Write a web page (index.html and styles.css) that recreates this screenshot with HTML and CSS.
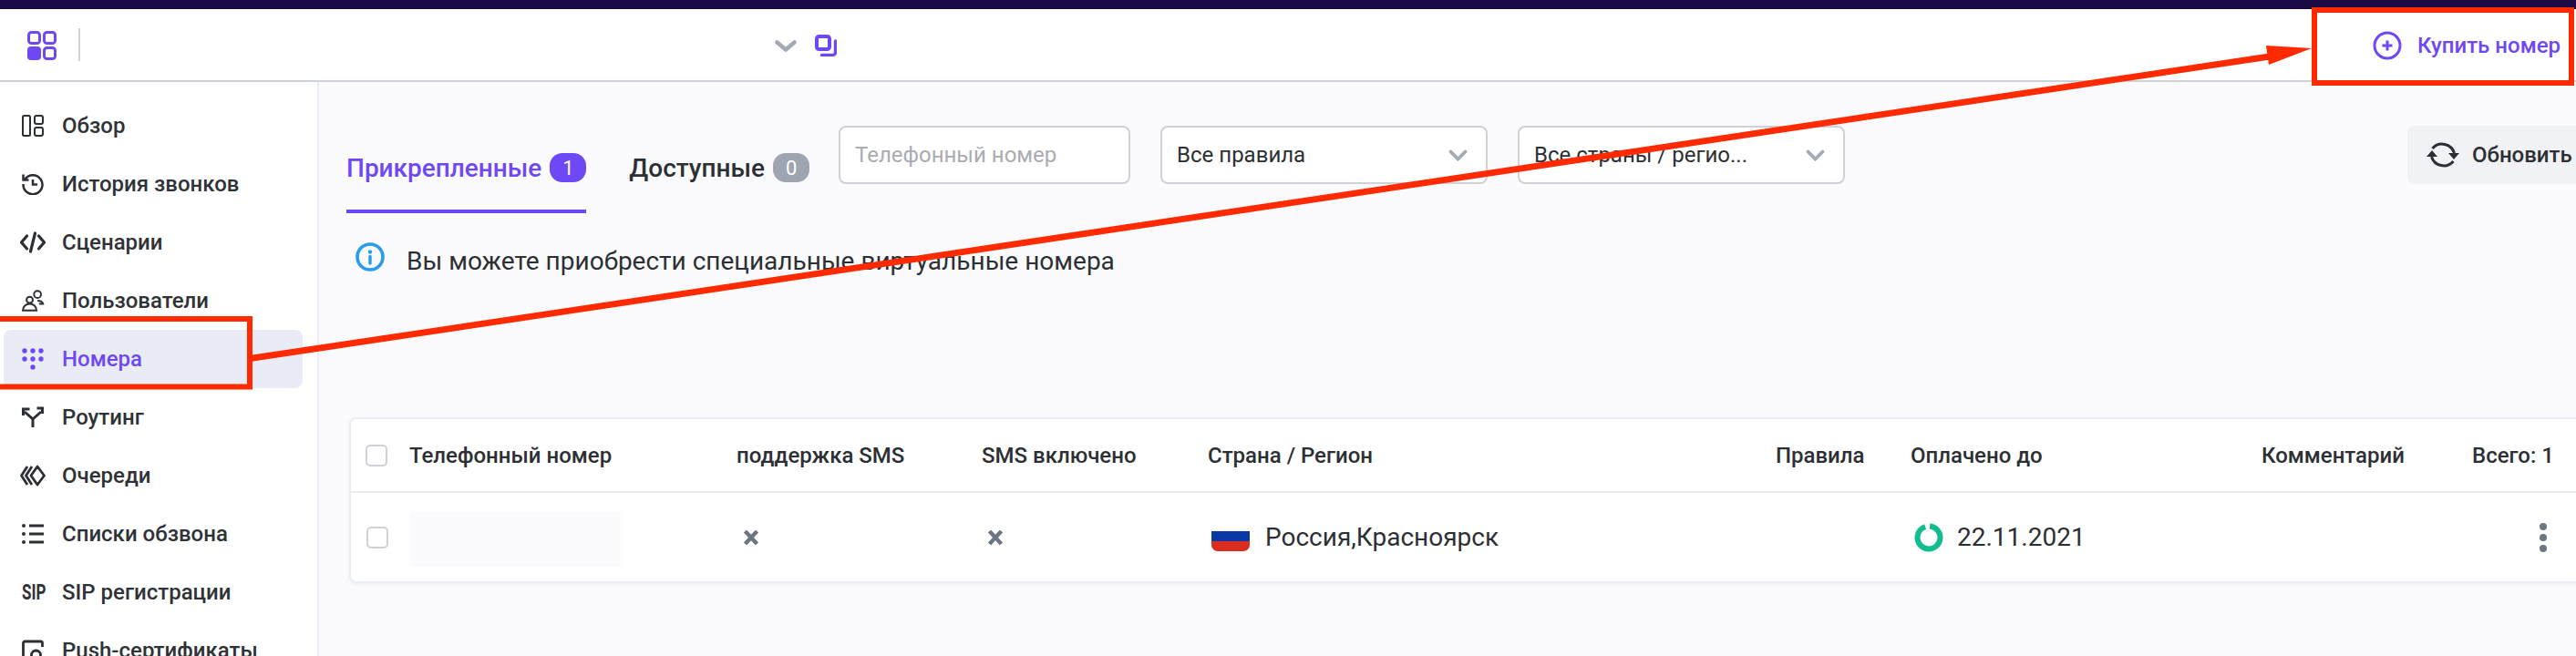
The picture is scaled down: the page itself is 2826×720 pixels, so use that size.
FILE: index.html
```html
<!DOCTYPE html>
<html lang="ru">
<head>
<meta charset="utf-8">
<title>Номера</title>
<link rel="stylesheet" href="styles.css">
</head>
<body>
<div class="topstrip"></div>
<header class="header">
  <svg class="apps" viewBox="0 0 32 32" width="32" height="32"><g fill="none" stroke="#6f48f6" stroke-width="3"><rect x="1.5" y="1.5" width="12" height="12" rx="3"/><rect x="18.5" y="1.5" width="12" height="12" rx="3"/><rect x="18.5" y="18.5" width="12" height="12" rx="3"/></g><rect x="0" y="17" width="15" height="15" rx="4" fill="#6f48f6"/></svg>
  <span class="vline"></span>
  <div class="switch">
    <svg viewBox="0 0 24 13" width="24" height="13"><path d="M2.500 2.500l9.500 8 9.500-8" fill="none" stroke="#a3a9b5" stroke-width="4.500" stroke-linecap="round" stroke-linejoin="round"/></svg>
    <svg viewBox="0 0 24 24" width="24" height="24"><rect x="2" y="2" width="14" height="14" rx="2.500" fill="none" stroke="#6f48f6" stroke-width="4"/><path d="M22.500 7v12.500a3 3 0 0 1-3 3H7.500" fill="none" stroke="#6f48f6" stroke-width="3.400" stroke-linecap="round"/></svg>
  </div>
  <a class="buy">
    <svg viewBox="0 0 32 32" width="32" height="32"><circle cx="16" cy="16" r="14" fill="none" stroke="#6f48f6" stroke-width="3"/><path d="M16 10.500v11M10.500 16h11" stroke="#6f48f6" stroke-width="3"/></svg>
    <span>Купить номер</span>
  </a>
</header>
<div class="body">
  <nav class="side">
    <a class="item"><svg class="ic" viewBox="0 0 24 24"><g fill="none" stroke="#2c2f33" stroke-width="2"><rect x="1" y="1" width="8" height="22" rx="1.500"/><rect x="14" y="1" width="9" height="9" rx="2"/><rect x="14" y="14" width="9" height="9" rx="2"/></g></svg><span>Обзор</span></a>
    <a class="item"><svg class="ic" viewBox="0 0 24 24"><path d="M3.500 6.500A10.500 10.500 0 1 1 1.500 12M1.500 1.500v6h6M12 7v5.500h5" fill="none" stroke="#2c2f33" stroke-width="2.500"/></svg><span>История звонков</span></a>
    <a class="item"><svg class="ic ic-w" viewBox="0 0 28 24"><path d="M7.500 5l-6 7 6 7M20.500 5l6 7-6 7M16.500 2l-5 20" fill="none" stroke="#2c2f33" stroke-width="3.200" stroke-linecap="round" stroke-linejoin="round"/></svg><span>Сценарии</span></a>
    <a class="item"><svg class="ic ic-w" viewBox="0 0 28 28"><g fill="none" stroke="#2c2f33" stroke-width="2.300"><circle cx="10" cy="13" r="4"/><path d="M1.200 26.500c0-5 4-8.500 8.800-8.500s8.800 3.500 8.800 8.500z"/><circle cx="20" cy="6" r="4.500"/><path d="M20 14c3 0 6 1 7 4h-5"/></g></svg><span>Пользователи</span></a>
    <a class="item active"><svg class="ic" viewBox="0 0 24 24"><g fill="#6f48f6"><circle cx="3" cy="3" r="2.700"/><circle cx="12" cy="3" r="2.700"/><circle cx="21" cy="3" r="2.700"/><circle cx="3" cy="12" r="2.700"/><circle cx="12" cy="12" r="2.700"/><circle cx="21" cy="12" r="2.700"/><circle cx="12" cy="21" r="2.700"/></g></svg><span>Номера</span></a>
    <a class="item"><svg class="ic" viewBox="0 0 24 24"><path d="M12 23v-9L3 6M12 14l9-8M1.500 10V3h7M22.500 8V2h-6" fill="none" stroke="#2c2f33" stroke-width="3"/></svg><span>Роутинг</span></a>
    <a class="item"><svg class="ic ic-w" viewBox="0 0 28 24"><path d="M8 2L1.500 12 8 22M13 2L6.500 12 13 22M19 2l-7 10 7 10 7.500-10z" fill="none" stroke="#2c2f33" stroke-width="2.800" stroke-linejoin="round"/></svg><span>Очереди</span></a>
    <a class="item"><svg class="ic" viewBox="0 0 24 24"><path d="M8 3h16M8 12h16M8 21h16" stroke="#2c2f33" stroke-width="2.800"/><g fill="#2c2f33"><circle cx="2" cy="3" r="2"/><circle cx="2" cy="12" r="2"/><circle cx="2" cy="21" r="2"/></g></svg><span>Списки обзвона</span></a>
    <a class="item"><b class="sip-ic">SIP</b><span>SIP регистрации</span></a>
    <a class="item"><svg class="ic" viewBox="0 0 24 24"><path d="M6 20H3a1.500 1.500 0 0 1-1.500-1.500V4A2 2 0 0 1 3.500 2h17A2 2 0 0 1 22.500 4v4" fill="none" stroke="#2c2f33" stroke-width="2.800"/><circle cx="15.500" cy="17" r="5" fill="none" stroke="#2c2f33" stroke-width="2.800"/></svg><span>Push-сертификаты</span></a>
  </nav>
  <main class="main">
    <div class="toolbar">
      <div class="tabs">
        <div class="tab on"><span>Прикрепленные</span><b class="badge">1</b></div>
        <div class="tab"><span>Доступные</span><b class="badge grey">0</b></div>
      </div>
      <div class="field input">Телефонный номер</div>
      <div class="field select"><span>Все правила</span><svg viewBox="0 0 20 13" width="21" height="13"><path d="M2 2.500l8 8 8-8" fill="none" stroke="#a3a9b5" stroke-width="3.800" stroke-linecap="round"/></svg></div>
      <div class="field select"><span>Все страны / регио...</span><svg viewBox="0 0 20 13" width="21" height="13"><path d="M2 2.500l8 8 8-8" fill="none" stroke="#a3a9b5" stroke-width="3.800" stroke-linecap="round"/></svg></div>
      <button class="refresh"><svg viewBox="0 0 36 32" width="36" height="32"><path d="M6.500 9A14 14 0 0 1 30.500 14M29.500 23A14 14 0 0 1 5.500 18" fill="none" stroke="#2c2f33" stroke-width="3"/><path d="M24 14h12l-6 7zM0 18h12l-6-7z" fill="#2c2f33"/></svg><span>Обновить</span></button>
    </div>
    <p class="notice"><svg viewBox="0 0 32 32" width="32" height="32"><circle cx="16" cy="16" r="14" fill="none" stroke="#2b9bed" stroke-width="3.600"/><circle cx="16" cy="10.500" r="2.200" fill="#2b9bed"/><path d="M16 15.500v7.500" stroke="#2b9bed" stroke-width="3.400" stroke-linecap="round"/></svg><span>Вы можете приобрести специальные виртуальные номера</span></p>
    <section class="card">
      <div class="row head">
        <span class="check"></span>
        <span class="c c1">Телефонный номер</span>
        <span class="c c2">поддержка SMS</span>
        <span class="c c3">SMS включено</span>
        <span class="c c4">Страна / Регион</span>
        <span class="c c5">Правила</span>
        <span class="c c6">Оплачено до</span>
        <span class="c c7">Комментарий</span>
        <span class="c c8">Всего: 1</span>
      </div>
      <div class="row data">
        <span class="check"></span>
        <span class="c c1"><i class="mask"></i></span>
        <span class="c c2"><svg viewBox="0 0 18 16" width="18" height="16"><path d="M2.500 1l13 14M15.500 1l-13 14" stroke="#6c7683" stroke-width="4.400"/></svg></span>
        <span class="c c3"><svg viewBox="0 0 18 16" width="18" height="16"><path d="M2.500 1l13 14M15.500 1l-13 14" stroke="#6c7683" stroke-width="4.400"/></svg></span>
        <span class="c c4 big"><i class="flag"></i>Россия,Красноярск</span>
        <span class="c c5"></span>
        <span class="c c6 big"><svg viewBox="0 0 32 32" width="32" height="32"><circle cx="16" cy="16" r="12.500" fill="none" stroke="#10bd8f" stroke-width="6" stroke-dasharray="73 5.500" transform="rotate(-85 16 16)"/></svg>22.11.2021</span>
        <span class="c c7"></span>
        <span class="c c8 more"><i></i><i></i><i></i></span>
      </div>
    </section>
  </main>
</div>
<svg class="marks" viewBox="0 0 2826 720" width="2826" height="720">
  <g fill="none" stroke="#ff2a00" stroke-width="6">
    <path d="M-5 350H274V424.500H-5"/>
    <rect x="2539" y="11" width="282" height="80"/>
  </g>
  <path d="M274 393.500L2490 62" stroke="#ff2a00" stroke-width="7"/>
  <path d="M2486 50L2536 53L2489 71z" fill="#ff2a00"/>
</svg>
</body>
</html>
```
FILE: styles.css
```css
* { box-sizing: border-box; }
html, body { margin: 0; padding: 0; }
body { position: relative; width: 2826px; height: 720px; overflow: hidden; background: #fbfbfd; font-family: Roboto, "Noto Sans", sans-serif; color: #2c2f33; font-size: 24px; }
.topstrip { height: 10px; background: #1c0a45; }
.header { height: 80px; background: #fff; border-bottom: 2px solid #ced2d8; display: flex; align-items: center; padding: 0 0 0 30px; }
.apps { flex: none; margin-top: 2px; }
.vline { width: 2px; height: 36px; background: #ced2d8; margin-left: 24px; }
.switch { display: flex; align-items: center; gap: 20px; margin-left: 762px; padding-top: 2px; }
.buy { margin-left: auto; display: flex; align-items: center; gap: 17px; padding: 2px 17px 0 0; color: #6f48f6; font-size: 24px; font-weight: 500; }
.body { display: flex; height: 630px; }
.side { width: 350px; flex: none; background: #fff; border-right: 2px solid #e9ecf3; padding: 16px 16px 0 4px; overflow: hidden; }
.item { display: flex; align-items: center; height: 64px; flex: none; border-radius: 8px; padding-left: 20px; font-size: 24px; font-weight: 500; gap: 20px; color: #2f3237; white-space: nowrap; }
.ic { width: 24px; height: 24px; flex: none; }
.ic-w { width: 28px; height: 24px; margin-left: -2px; margin-right: -2px; }
.sip-ic { flex: none; width: 24px; font-size: 23px; font-weight: 700; transform: scaleX(.74); transform-origin: left center; letter-spacing: 0; }
.item.active { background: #e9ecf5; color: #6f48f6; }
.main { flex: 1; min-width: 0; padding-left: 30px; }
.toolbar { height: 144px; display: flex; align-items: flex-start; }
.tabs { display: flex; gap: 47px; }
.tab { display: flex; align-items: center; gap: 9px; height: 144px; padding-top: 48px; font-size: 28px; font-weight: 500; border-bottom: 4px solid transparent; white-space: nowrap; }
.tab.on { color: #6f48f6; border-bottom-color: #6f48f6; }
.badge { width: 40px; height: 32px; border-radius: 14px; background: #6f48f6; color: #fff; font-size: 22px; font-weight: 400; display: flex; align-items: center; justify-content: center; }
.badge.grey { background: #9ea4b0; }
.field { height: 64px; margin-top: 48px; background: #fff; border: 2px solid #ced2d8; border-radius: 8px; font-size: 24px; display: flex; align-items: center; padding: 0 16px; white-space: nowrap; flex: none; }
.input { width: 320px; margin-left: 32px; color: #a9acb1; }
.select { width: 359px; justify-content: space-between; margin-left: 33px; padding-right: 20px; }
.refresh { margin: 48px 0 0 617px; height: 64px; width: 200px; flex: none; background: #f1f2f6; border: 0; border-radius: 8px; color: #2c2f33; font: 500 24px Roboto, sans-serif; display: flex; align-items: center; gap: 14px; padding: 0 0 0 21px; white-space: nowrap; }
.notice { margin: 0; height: 96px; display: flex; align-items: center; gap: 24px; padding-left: 10px; font-size: 28px; white-space: nowrap; }
.notice span { padding-top: 8px; }
.card { margin: 128px 0 0 3px; width: 2500px; height: 182px; background: #fff; border: 2px solid #e9ecf3; border-radius: 8px; box-shadow: 0 2px 4px rgba(170, 180, 200, .15); }
.row { display: flex; align-items: center; }
.head { height: 81px; border-bottom: 2px solid #e9ecf3; font-size: 24px; font-weight: 500; padding-left: 16px; }
.data { height: 97px; padding-left: 17px; }
.check { width: 24px; height: 24px; flex: none; border: 2px solid #ced2d8; border-radius: 5px; background: #fff; }
.c { flex: none; white-space: nowrap; display: flex; align-items: center; }
.c1 { width: 359px; margin-left: 24px; }
.c2 { width: 269px; }
.c3 { width: 248px; }
.c4 { width: 623px; }
.c5 { width: 148px; }
.c6 { width: 385px; }
.c7 { width: 231px; }
.c8 { width: 120px; }
.data .c1 { width: 358px; }
.data .c2 svg { margin-left: 7px; }
.data .c3 svg { margin-left: 6px; }
.mask { display: block; width: 232px; height: 61px; margin-top: 4px; background: #fbfbfd; }
.big { font-size: 28px; font-weight: 400; }
.flag { display: block; width: 42px; height: 22px; margin: 8px 17px 0 4px; border-radius: 0 0 7px 7px; background: linear-gradient(#0a39a6 0 50%, #d92d20 50% 100%); }
.c6 svg { margin: 0 15px 0 4px; }
.more { flex-direction: column; gap: 4px; align-items: flex-start; padding-left: 74px; }
.more i { display: block; width: 8px; height: 8px; border-radius: 50%; background: #6c7683; }
.marks { position: absolute; left: 0; top: 0; pointer-events: none; }
```
